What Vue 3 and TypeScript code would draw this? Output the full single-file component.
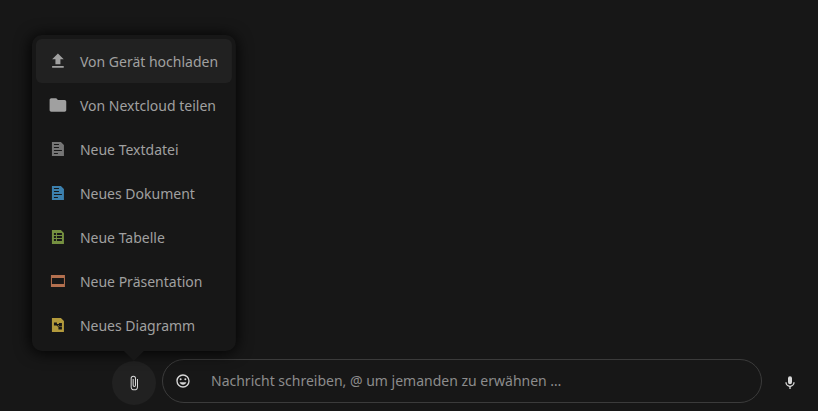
<script setup lang="ts">
import { ref } from 'vue'

interface Entry {
  label: string
  tone: string
  path: string
}

const sheet = 'M4 3h9l3 3v11H4z'
const lines = 'M6 5v1h5V5zM6 8v1h5V8zM6 11v1h8v-1zM6 14v1h4v-1z'

const entries: Entry[] = [
  {
    label: 'Von Gerät hochladen',
    tone: 'plain',
    path: 'M7.5 13.3V8.3H4.2L10 2.5l5.8 5.8h-3.3v5zM4.2 16.7V15h11.6v1.7z',
  },
  {
    label: 'Von Nextcloud teilen',
    tone: 'plain',
    path: 'M8.33 3.33h-5c-.92 0-1.66.75-1.66 1.67v10c0 .92.75 1.67 1.66 1.67h13.34c.92 0 1.66-.75 1.66-1.67V6.67c0-.92-.75-1.67-1.66-1.67H10z',
  },
  {
    label: 'Neue Textdatei',
    tone: 'text',
    path: sheet + lines,
  },
  {
    label: 'Neues Dokument',
    tone: 'document',
    path: sheet + lines,
  },
  {
    label: 'Neue Tabelle',
    tone: 'table',
    path: sheet + 'M6 6v2h2V6zM9 6v2h5V6zM6 9v2h2V9zM9 9v2h5V9zM6 12v2h2v-2zM9 12v2h5v-2z',
  },
  {
    label: 'Neue Präsentation',
    tone: 'slides',
    path: 'M3 4h14v12H3zM4 7v6h12V7z',
  },
  {
    label: 'Neues Diagramm',
    tone: 'diagram',
    path: sheet + 'M6 7.500v3h2.500l2 1.500v2.500H14v-3h-3l-1.500-1.200H11v.7h3v-3h-3v1H9v-1.500z',
  },
]

const message = ref('')
</script>

<template>
  <main class="chat">
    <form class="composer" @submit.prevent>
      <div class="attach">
        <button class="round attach-toggle" type="button" aria-label="Anhang" aria-expanded="true">
          <svg class="small-icon" viewBox="0 0 24 24" aria-hidden="true">
            <path d="M16.5 6v11.5a4 4 0 0 1-8 0V5a2.5 2.5 0 0 1 5 0v10.5a1 1 0 0 1-2 0V6H10v9.5a2.5 2.5 0 0 0 5 0V5a4 4 0 0 0-8 0v12.5a5.5 5.5 0 0 0 11 0V6z" />
          </svg>
        </button>
        <ul class="menu">
          <li v-for="(entry, index) in entries" :key="entry.label">
            <button class="entry" :class="{ active: index === 0 }" type="button">
              <svg class="entry-icon" :class="entry.tone" viewBox="0 0 20 20" aria-hidden="true">
                <path fill-rule="evenodd" :d="entry.path" />
              </svg>
              <span>{{ entry.label }}</span>
            </button>
          </li>
        </ul>
      </div>
      <div class="field">
        <button class="emoji" type="button" aria-label="Emoji">
          <svg class="small-icon" viewBox="0 0 24 24" aria-hidden="true">
            <path d="M12 17.5c2.33 0 4.3-1.46 5.11-3.5H6.89c.8 2.04 2.78 3.5 5.11 3.5M8.5 11A1.5 1.5 0 0 0 10 9.5 1.5 1.5 0 0 0 8.5 8 1.5 1.5 0 0 0 7 9.5 1.5 1.5 0 0 0 8.5 11m7 0A1.5 1.5 0 0 0 17 9.5 1.5 1.5 0 0 0 15.5 8 1.5 1.5 0 0 0 14 9.5 1.5 1.5 0 0 0 15.5 11M12 20a8 8 0 1 1 0-16 8 8 0 0 1 0 16m0-18C6.47 2 2 6.5 2 12a10 10 0 1 0 10-10" />
          </svg>
        </button>
        <input
          v-model="message"
          class="message"
          type="text"
          aria-label="Nachricht"
          placeholder="Nachricht schreiben, @ um jemanden zu erwähnen …"
        />
      </div>
      <button class="round" type="button" aria-label="Sprachnachricht aufnehmen">
        <svg class="small-icon" viewBox="0 0 24 24" aria-hidden="true">
          <path d="M12 2a3 3 0 0 1 3 3v6a3 3 0 0 1-6 0V5a3 3 0 0 1 3-3m7 9c0 3.53-2.61 6.44-6 6.93V21h-2v-3.07c-3.39-.49-6-3.4-6-6.93h2a5 5 0 0 0 10 0z" />
        </svg>
      </button>
    </form>
  </main>
</template>

<style>
body {
  margin: 0;
  background: #171717;
}
</style>

<style scoped>
.chat {
  box-sizing: border-box;
  min-height: 100vh;
  display: flex;
  flex-direction: column;
  justify-content: flex-end;
  background: #171717;
  color: #a0a0a0;
  font-family: "Segoe UI", "Noto Sans", sans-serif;
  font-size: 14px;
}

.composer {
  display: flex;
  align-items: flex-end;
  gap: 6px;
  padding: 0 6px 6px 112px;
}

.attach {
  position: relative;
}

button {
  font: inherit;
  color: inherit;
  border: 0;
  padding: 0;
  background: transparent;
  cursor: pointer;
}

.round {
  display: flex;
  align-items: center;
  justify-content: center;
  width: 44px;
  height: 44px;
  border-radius: 50%;
  color: #d8d8d8;
}

.attach-toggle {
  background: #212121;
}

.small-icon {
  display: block;
  width: 16px;
  height: 16px;
  fill: currentColor;
}

.field {
  flex: 1;
  display: flex;
  align-items: center;
  box-sizing: border-box;
  height: 44px;
  margin-bottom: 2px;
  border: 1px solid #3b3b3b;
  border-radius: 22px;
}

.emoji {
  display: flex;
  align-items: center;
  justify-content: center;
  width: 40px;
  height: 42px;
  color: #d8d8d8;
}

.message {
  flex: 1;
  min-width: 0;
  height: 42px;
  box-sizing: border-box;
  padding: 0 16px 2px 8px;
  border: 0;
  outline: 0;
  background: transparent;
  color: #d8d8d8;
  font: inherit;
}

.message::placeholder {
  color: #8c8c8c;
  opacity: 1;
}

.menu {
  position: absolute;
  left: 50%;
  bottom: calc(100% + 10px);
  transform: translateX(-50%);
  margin: 0;
  padding: 4px;
  list-style: none;
  border-radius: 10px;
  background: #171717;
  box-shadow: 0 1px 16px #000000;
}

.menu::after {
  content: "";
  position: absolute;
  top: 100%;
  left: 50%;
  margin-left: -10px;
  border: 10px solid transparent;
  border-top-color: #171717;
  border-bottom: 0;
}

.entry {
  display: flex;
  align-items: center;
  gap: 12px;
  width: 100%;
  height: 44px;
  padding: 0 14px 0 12px;
  border-radius: 6px;
  text-align: left;
  white-space: nowrap;
}

.entry.active {
  background: #212121;
}

.entry-icon {
  flex: none;
  width: 20px;
  height: 20px;
}

.plain {
  fill: #a0a0a0;
}

.text {
  fill: #757575;
}

.document {
  fill: #3c80ae;
}

.table {
  fill: #759040;
}

.slides {
  fill: #b4704f;
}

.diagram {
  fill: #b39a3c;
}
</style>
